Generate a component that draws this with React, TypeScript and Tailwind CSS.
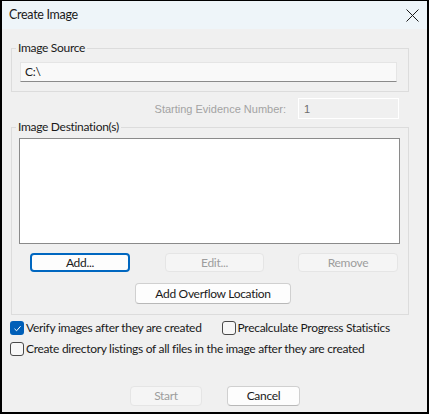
import React from "react";

const ui = "font-['Lato',sans-serif] text-[12px] leading-[16px] tracking-[-0.3px] text-[#1a1a1a]";

function Button({
  label,
  width,
  disabled,
  focused,
  className = "",
}: {
  label: string;
  width: string;
  disabled?: boolean;
  focused?: boolean;
  className?: string;
}) {
  const look = disabled
    ? "bg-[#f5f5f5] border border-[#e5e5e5] text-[#9d9d9d]"
    : focused
      ? "bg-[#fdfdfd] border-2 border-[#0067c0] text-[#1a1a1a]"
      : "bg-[#fdfdfd] border border-[#d0d0d0] border-b-[#b8b8b8] text-[#1a1a1a]";
  return (
    <div className={`${width} ${look} ${className} flex items-center justify-center rounded-[4px]`}>
      {label}
    </div>
  );
}

function Checkbox({ checked, label }: { checked?: boolean; label: string }) {
  return (
    <div className="flex items-center h-[16px]">
      {checked ? (
        <div className="w-[14px] h-[14px] rounded-[3px] bg-[#005fb8] flex items-center justify-center">
          <svg width="9" height="9" viewBox="0 0 9 9">
            <path d="M1.5 4.8 L3.6 6.8 L7.6 2.2" stroke="#fff" strokeWidth="1" fill="none" />
          </svg>
        </div>
      ) : (
        <div className="w-[14px] h-[14px] rounded-[3px] border border-[#4a4a4a] bg-[#f7f7f7]" />
      )}
      <span className="ml-[2px] whitespace-nowrap">{label}</span>
    </div>
  );
}

export default function App() {
  return (
    <div className={`${ui} w-[429px] h-[414px] bg-black pt-px px-[2px] pb-[2px] flex flex-col`}>
      {/* title bar */}
      <div className="h-[28px] bg-[#eef5f9] flex items-center justify-between pl-[7px] pr-[8px]">
        <span className="text-[12.5px]">Create Image</span>
        <svg width="13" height="13" viewBox="0 0 13 13">
          <path d="M0.5 0.5 L12.5 12.5 M12.5 0.5 L0.5 12.5" stroke="#1a1a1a" strokeWidth="1" />
        </svg>
      </div>

      <div className="flex-1 bg-[#f0f0f0] flex flex-col">
        {/* source */}
        <fieldset className="mt-[11px] ml-[9px] w-[398px] border border-[#dcdcdc] pl-[8px] pt-[6px] pb-[9px]">
          <legend className="-ml-[4px] px-[2px]">Image Source</legend>
          <div className="w-[377px] h-[20px] bg-[#f9f9f9] border border-[#e5e5e5] border-b-[#8a8a8a] flex items-center pl-[4px]">
            C:\
          </div>
        </fieldset>

        <div className="mt-[6px] ml-[9px] w-[398px] pr-[10px] flex items-center justify-end h-[21px] font-['Liberation_Sans',sans-serif] tracking-normal text-[11px] text-[#a3a3a3]">
          <span className="mr-[12px]">Starting Evidence Number:</span>
          <div className="w-[101px] h-[21px] border border-white flex items-center pl-[5px] text-[#6d6d6d]">1</div>
        </div>

        {/* destinations */}
        <fieldset className="ml-[9px] w-[398px] border border-[#dcdcdc] pl-[7px] pt-[3px] pb-[10px]">
          <legend className="-ml-[3px] px-[2px]">Image Destination(s)</legend>
          <div className="w-[381px] h-[106px] bg-white border border-[#8a8a8a]" />
          <div className="mt-[9px] h-[19px] flex">
            <Button label="Add..." width="w-[100px]" focused className="ml-[11px]" />
            <Button label="Edit..." width="w-[99px]" disabled className="ml-[35px]" />
            <Button label="Remove" width="w-[100px]" disabled className="ml-[34px]" />
          </div>
          <div className="mt-[11px] h-[21px] flex">
            <Button label="Add Overflow Location" width="w-[156px]" className="ml-[116px]" />
          </div>
        </fieldset>

        <div className="mt-[5px] ml-[8px] flex">
          <Checkbox checked label="Verify images after they are created" />
          <div className="ml-[20px]">
            <Checkbox label="Precalculate Progress Statistics" />
          </div>
        </div>
        <div className="mt-[5px] ml-[8px] flex">
          <Checkbox label="Create directory listings of all files in the image after they are created" />
        </div>

        <div className="mt-[29px] h-[20px] flex ml-[128px]">
          <Button label="Start" width="w-[72px]" disabled />
          <Button label="Cancel" width="w-[73px]" className="ml-[25px]" />
        </div>
      </div>
    </div>
  );
}
